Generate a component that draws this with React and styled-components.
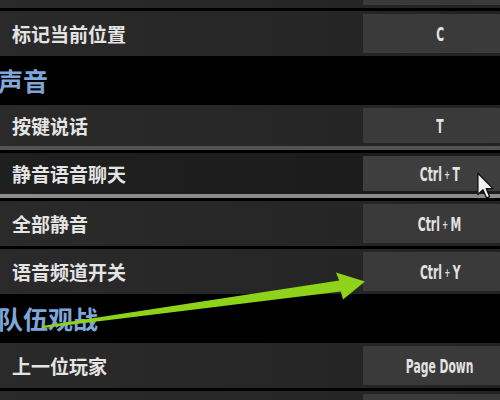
import styled, { createGlobalStyle } from "styled-components";

const GlobalStyle = createGlobalStyle`
  html, body {
    margin: 0;
    padding: 0;
    background: #000;
    overflow: hidden;
  }
  #root {
    position: relative;
    width: 500px;
    height: 400px;
    overflow: hidden;
  }
`;

const keyBinds = [
    { type: "row", label: "", key: "" },
    { type: "row", label: "标记当前位置", key: "C" },
    { type: "section", label: "声音" },
    { type: "row", label: "按键说话", key: "T", edge: "#535353" },
    { type: "row", label: "静音语音聊天", key: "Ctrl+T", edge: "#8c8c8c", hover: true },
    { type: "row", label: "全部静音", key: "Ctrl+M" },
    { type: "row", label: "语音频道开关", key: "Ctrl+Y" },
    { type: "section", label: "队伍观战" },
    { type: "row", label: "上一位玩家", key: "Page Down" },
    { type: "row", label: "", key: "" },
];

const KeyText = ({ value }) => {
    const parts = value.split("+");
    if (parts.length === 1) return <KeyLabel>{value}</KeyLabel>;
    return (
        <KeyLabel>
            {parts[0]}
            <Plus>+</Plus>
            {parts[1]}
        </KeyLabel>
    );
};

const App = () => {
    return (
        <>
            <GlobalStyle/>
            <List>
                {keyBinds.map((item, i) =>
                    item.type === "section" ? (
                        <Section key={i}>{item.label}</Section>
                    ) : (
                        <Row key={i} $edge={item.edge} $hover={item.hover}>
                            <Label>{item.label}</Label>
                            <Key $hover={item.hover}>
                                {item.key && <KeyText value={item.key}/>}
                            </Key>
                        </Row>
                    )
                )}
            </List>
            <Arrow viewBox="0 0 500 400" width="500" height="400">
                <polygon
                    points="42,326 339.2,280.5 336,272.5 365,281.5 343,299.5 340.8,291.5 42,328.2"
                    fill="#8ed21a"
                />
            </Arrow>
            <Cursor viewBox="0 0 13 21" width="17" height="28">
                <path
                    d="M0.7 0.7 L0.7 17 L4.6 13.3 L7.3 19.6 L9.6 18.6 L7 12.5 L12.2 12.5 Z"
                    fill="#f4f4f4"
                    stroke="#111"
                    strokeWidth="1"
                    strokeLinejoin="round"
                />
            </Cursor>
        </>
    );
};

const List = styled.div`
  width: 517px;
  margin-top: -37px;
  display: flex;
  flex-direction: column;
`;

const Row = styled.div`
  box-sizing: border-box;
  height: 45px;
  margin-bottom: 3px;
  padding: 3px 0;
  display: flex;
  align-items: stretch;
  background: ${p => p.$hover
    ? "linear-gradient(90deg, #1f1f1f, #1b1b1b)"
    : "linear-gradient(90deg, #2b2a2a, #262525 70%, #232222)"};
  border-bottom: ${p => p.$edge ? `4px solid ${p.$edge}` : "none"};
`;

const Label = styled.div`
  flex: 1;
  display: flex;
  align-items: center;
  padding-left: 12px;
  font-family: "Noto Sans CJK SC", "Noto Sans", sans-serif;
  font-weight: 700;
  font-size: 19px;
  color: #e4e4e4;
`;

const Key = styled.div`
  width: 154px;
  display: flex;
  align-items: center;
  justify-content: center;
  background: ${p => p.$hover ? "#3e3e3e" : "#3a3a3a"};
`;

const KeyLabel = styled.span`
  display: inline-block;
  font-family: "DejaVu Sans Condensed", "DejaVu Sans", sans-serif;
  font-weight: 700;
  font-size: 19px;
  color: #e2e2e2;
  transform: scaleX(0.63);
  white-space: nowrap;
`;

const Plus = styled.span`
  font-size: 12px;
  margin: 0 4px;
  position: relative;
  top: -2px;
`;

const Section = styled.div`
  box-sizing: border-box;
  height: 46px;
  padding-bottom: 4px;
  display: flex;
  align-items: center;
  margin-left: -2px;
  font-family: "Noto Sans CJK SC", "Noto Sans", sans-serif;
  font-weight: 700;
  font-size: 25px;
  color: #7ea6d9;
`;

const Arrow = styled.svg`
  position: absolute;
  left: 0;
  top: 0;
  pointer-events: none;
`;

const Cursor = styled.svg`
  position: absolute;
  left: 477px;
  top: 172px;
`;

export default App;
